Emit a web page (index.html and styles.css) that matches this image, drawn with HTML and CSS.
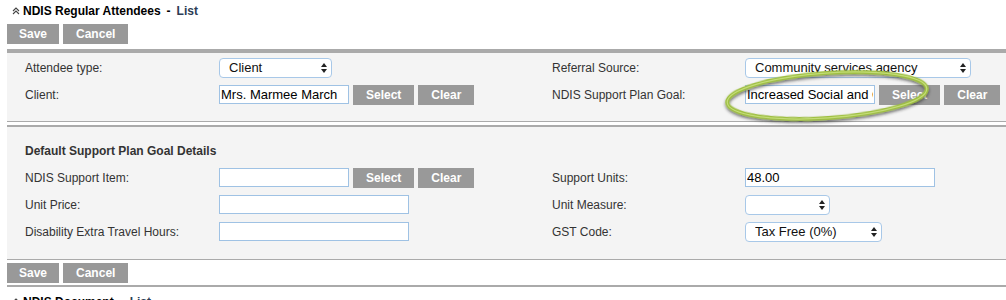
FILE: index.html
```html
<!DOCTYPE html>
<html lang="en">
<head>
  <meta charset="UTF-8" />
  <title>NDIS Regular Attendees</title>
  <link rel="stylesheet" href="styles.css">
</head>
<body>

  <div class="page">

    <div class="section-title">
      <svg class="collapse" width="8" height="8" viewBox="0 0 8 8">
        <polyline points="1,4 4,1 7,4" />
        <polyline points="1,7 4,4 7,7" />
      </svg>
      <b>NDIS Regular Attendees</b>
      <span class="dash">-</span>
      <span class="list-link">List</span>
    </div>

    <div class="actions">
      <button class="btn">Save</button>
      <button class="btn">Cancel</button>
    </div>

    <div class="panel panel-first">
      <div class="form-grid">
        <label>Attendee type:</label>
        <div class="field">
          <span class="select-wrap sel-type">
            <select><option>Client</option></select>
            <svg class="arrows" width="6" height="10" viewBox="0 0 6 10"><polygon points="0,4 3,0 6,4" /><polygon points="0,6 6,6 3,10" /></svg>
          </span>
        </div>
        <label>Referral Source:</label>
        <div class="field">
          <span class="select-wrap sel-referral">
            <select><option>Community services agency</option></select>
            <svg class="arrows" width="6" height="10" viewBox="0 0 6 10"><polygon points="0,4 3,0 6,4" /><polygon points="0,6 6,6 3,10" /></svg>
          </span>
        </div>

        <label>Client:</label>
        <div class="field">
          <input type="text" class="in-short" value="Mrs. Marmee March" />
          <button class="btn">Select</button>
          <button class="btn">Clear</button>
        </div>
        <label>NDIS Support Plan Goal:</label>
        <div class="field">
          <input type="text" class="in-short" value="Increased Social and Community Participation" />
          <button class="btn">Select</button>
          <button class="btn">Clear</button>
        </div>
      </div>
    </div>

    <div class="panel panel-second">
      <div class="form-grid">
        <div class="group-title">Default Support Plan Goal Details</div>

        <label>NDIS Support Item:</label>
        <div class="field">
          <input type="text" class="in-short" value="" />
          <button class="btn">Select</button>
          <button class="btn">Clear</button>
        </div>
        <label>Support Units:</label>
        <div class="field">
          <input type="text" class="in-long" value="48.00" />
        </div>

        <label>Unit Price:</label>
        <div class="field">
          <input type="text" class="in-long" value="" />
        </div>
        <label>Unit Measure:</label>
        <div class="field">
          <span class="select-wrap sel-measure">
            <select><option></option></select>
            <svg class="arrows" width="6" height="10" viewBox="0 0 6 10"><polygon points="0,4 3,0 6,4" /><polygon points="0,6 6,6 3,10" /></svg>
          </span>
        </div>

        <label>Disability Extra Travel Hours:</label>
        <div class="field">
          <input type="text" class="in-long" value="" />
        </div>
        <label>GST Code:</label>
        <div class="field">
          <span class="select-wrap sel-gst">
            <select><option>Tax Free (0%)</option></select>
            <svg class="arrows" width="6" height="10" viewBox="0 0 6 10"><polygon points="0,4 3,0 6,4" /><polygon points="0,6 6,6 3,10" /></svg>
          </span>
        </div>
      </div>
    </div>

    <div class="actions actions-bottom">
      <button class="btn">Save</button>
      <button class="btn">Cancel</button>
    </div>

    <div class="section-title section-next">
      <svg class="collapse" width="8" height="8" viewBox="0 0 8 8">
        <polyline points="1,4 4,1 7,4" />
        <polyline points="1,7 4,4 7,7" />
      </svg>
      <b>NDIS Document</b>
      <span class="dash">-</span>
      <span class="list-link">List</span>
    </div>

  </div>

  <!-- highlight drawn on top of the goal field -->
  <svg class="highlight" width="226" height="68" viewBox="0 0 226 68">
    <defs>
      <filter id="ring-shadow" x="-10%" y="-30%" width="120%" height="160%">
        <feDropShadow dx="0" dy="2" stdDeviation="1.4" flood-color="#222" flood-opacity="0.65" />
      </filter>
    </defs>
    <ellipse class="ring" cx="112" cy="33.5" rx="100" ry="22.5" transform="rotate(-4 112 33.5)" filter="url(#ring-shadow)" />
    <ellipse class="ring-shine" cx="112" cy="33.5" rx="100" ry="22.5" transform="rotate(-4 112 33.5)" />
  </svg>

</body>
</html>
```

FILE: styles.css
```css
* {
  box-sizing: border-box;
}

body {
  margin: 0;
  background-color: #ffffff;
  font-family: "Liberation Sans", Arial, Helvetica, sans-serif;
  color: #333;
  overflow: hidden;
}

.page {
  padding-left: 7px;
}

.section-title {
  display: flex;
  align-items: center;
  padding: 4px 0 0 5px;
  height: 18px;
  font-size: 12px;
  line-height: 14px;
  color: #000;
}

.section-title b {
  margin-left: 3px;
}

.section-title .dash {
  font-weight: bold;
  margin: 0 6px;
}

.section-title .list-link {
  font-weight: bold;
  color: #2d3d55;
}

.collapse {
  fill: none;
  stroke: #444;
  stroke-width: 1.1;
}

.section-next {
  padding-top: 8px;
  height: 22px;
}

.actions {
  display: flex;
  gap: 4px;
  margin-top: 6px;
  padding-bottom: 5px;
  border-bottom: 4px solid #aaaaaa;
}

.actions-bottom {
  margin-top: 3px;
  padding-bottom: 2px;
  border-bottom: 2px solid #aaaaaa;
}

.btn {
  height: 20px;
  padding: 0 13px;
  border: none;
  background-color: #999999;
  color: #fff;
  font-family: inherit;
  font-size: 12px;
  font-weight: bold;
  line-height: 20px;
  cursor: pointer;
}

.actions .btn:first-child {
  padding: 0 12px;
}

.panel {
  background-color: #f4f4f4;
  padding: 1px 0 13px 18px;
  border-bottom: 1px solid #aaaaaa;
}

.panel-second {
  margin-top: 3px;
  padding-top: 10px;
  padding-bottom: 14px;
  border-top: 2px solid #aaaaaa;
}

.form-grid {
  display: grid;
  grid-template-columns: 194px 333px 193px 1fr;
  grid-auto-rows: 27px;
  align-items: center;
}

.form-grid label {
  font-size: 12px;
  color: #333;
}

.group-title {
  grid-column: 1 / -1;
  font-size: 12px;
  font-weight: bold;
  color: #333;
}

.field {
  display: flex;
  align-items: center;
  gap: 4px;
}

.field input {
  height: 19px;
  padding: 0 1px;
  border: 1px solid #9fc2e4;
  background: #fff;
  color: #000;
  font-family: inherit;
  font-size: 13px;
  outline: none;
}

.in-short {
  width: 130px;
}

.in-long {
  width: 190px;
}

.select-wrap {
  position: relative;
  display: inline-block;
  height: 20px;
}

.select-wrap select {
  appearance: none;
  -webkit-appearance: none;
  width: 100%;
  height: 20px;
  padding: 0 16px 0 9px;
  border: 1px solid #a8c8e8;
  border-radius: 4px;
  background: #fff;
  color: #111;
  font-family: inherit;
  font-size: 13px;
  outline: none;
}

.select-wrap .arrows {
  position: absolute;
  right: 5px;
  top: 5px;
  fill: #222;
  pointer-events: none;
}

.sel-type {
  width: 113px;
}

.sel-referral {
  width: 226px;
}

.sel-measure {
  width: 85px;
}

.sel-gst {
  width: 137px;
}

.highlight {
  position: absolute;
  left: 715px;
  top: 62px;
  pointer-events: none;
}

.highlight .ring {
  fill: none;
  stroke: #9fbf42;
  stroke-width: 4;
}

.highlight .ring-shine {
  fill: none;
  stroke: #c3dc78;
  stroke-width: 1.2;
}
```
